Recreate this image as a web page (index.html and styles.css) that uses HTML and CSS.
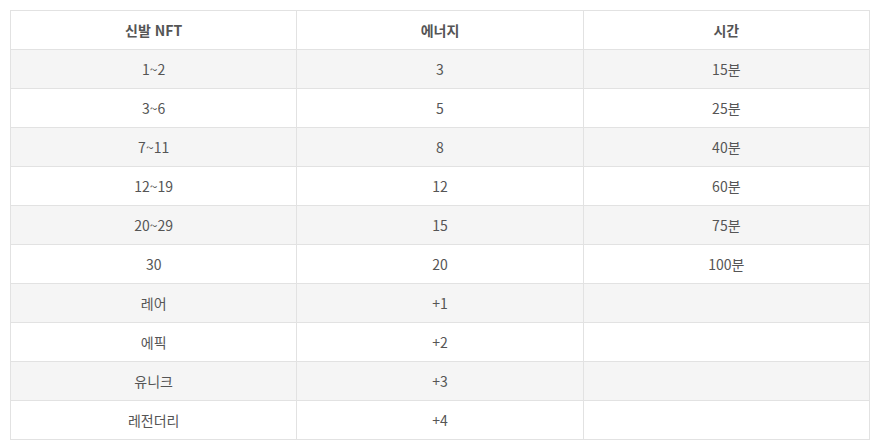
FILE: index.html
```html
<!DOCTYPE html>
<html lang="ko">
<head>
<meta charset="utf-8">
<link rel="stylesheet" href="styles.css">
</head>
<body>
<table class="energy-table">
  <thead>
    <tr><th>신발 NFT</th><th>에너지</th><th>시간</th></tr>
  </thead>
  <tbody>
    <tr><td>1~2</td><td>3</td><td>15분</td></tr>
    <tr><td>3~6</td><td>5</td><td>25분</td></tr>
    <tr><td>7~11</td><td>8</td><td>40분</td></tr>
    <tr><td>12~19</td><td>12</td><td>60분</td></tr>
    <tr><td>20~29</td><td>15</td><td>75분</td></tr>
    <tr><td>30</td><td>20</td><td>100분</td></tr>
    <tr><td>레어</td><td>+1</td><td></td></tr>
    <tr><td>에픽</td><td>+2</td><td></td></tr>
    <tr><td>유니크</td><td>+3</td><td></td></tr>
    <tr><td>레전더리</td><td>+4</td><td></td></tr>
  </tbody>
</table>
</body>
</html>
```
FILE: styles.css
```css
html, body {
  margin: 0;
  padding: 0;
  background: #fff;
}
body {
  padding: 10px;
  font-family: "Noto Sans CJK KR", "Noto Sans", sans-serif;
  font-size: 14px;
  color: #555;
}
.energy-table {
  width: 860px;
  border-collapse: collapse;
  table-layout: fixed;
}
.energy-table th,
.energy-table td {
  border: 1px solid #e2e2e2;
  height: 39px;
  padding: 0;
  text-align: center;
  vertical-align: middle;
  box-sizing: border-box;
}
.energy-table th {
  font-weight: 700;
  color: #555;
}
.energy-table tbody tr:nth-child(odd) {
  background: #f5f5f5;
}
```
